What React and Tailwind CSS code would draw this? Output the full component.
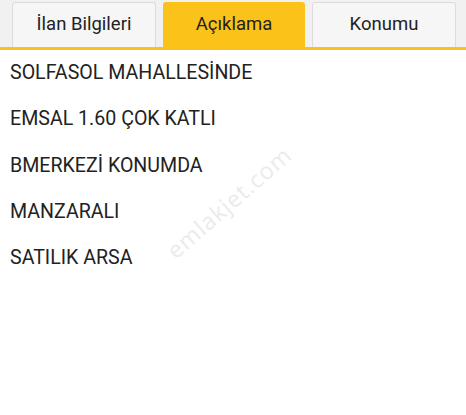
import React from 'react';

const TABS = ['İlan Bilgileri', 'Açıklama', 'Konumu'];
const LINES = [
  'SOLFASOL MAHALLESİNDE',
  'EMSAL 1.60 ÇOK KATLI',
  'BMERKEZİ KONUMDA',
  'MANZARALI',
  'SATILIK ARSA',
];

export default function App() {
  const active = 1;
  return (
    <div className="relative w-[466px] h-[415px] overflow-hidden bg-white font-['Roboto',sans-serif]">
      <div className="flex gap-[7px] bg-[#f1f1f1] pl-[12px] pr-[10px] pt-[2px] border-b-[3px] border-[#fbc319]">
        {TABS.map((t, i) => (
          <div
            key={t}
            className={
              i === active
                ? 'flex-1 h-[45px] flex items-center justify-center rounded-t-[3px] bg-[#fbc319] text-[18.5px] text-[#222]'
                : 'flex-1 h-[45px] flex items-center justify-center rounded-t-[3px] bg-[#f6f6f6] border border-b-0 border-[#dcdcdc] text-[18.5px] text-[#222]'
            }
          >
            {t}
          </div>
        ))}
      </div>
      <div className="pl-[10px]">
        {LINES.map((l) => (
          <p key={l} className="h-[46.3px] leading-[46px] text-[19.6px] text-[#222]">
            {l}
          </p>
        ))}
      </div>
      <div className="pointer-events-none absolute left-[151px] top-[185px] -rotate-[41deg] text-[23px] text-[#ebebeb] font-['Open_Sans',sans-serif] tracking-[1px]">
        emlakjet.com
      </div>
    </div>
  );
}
